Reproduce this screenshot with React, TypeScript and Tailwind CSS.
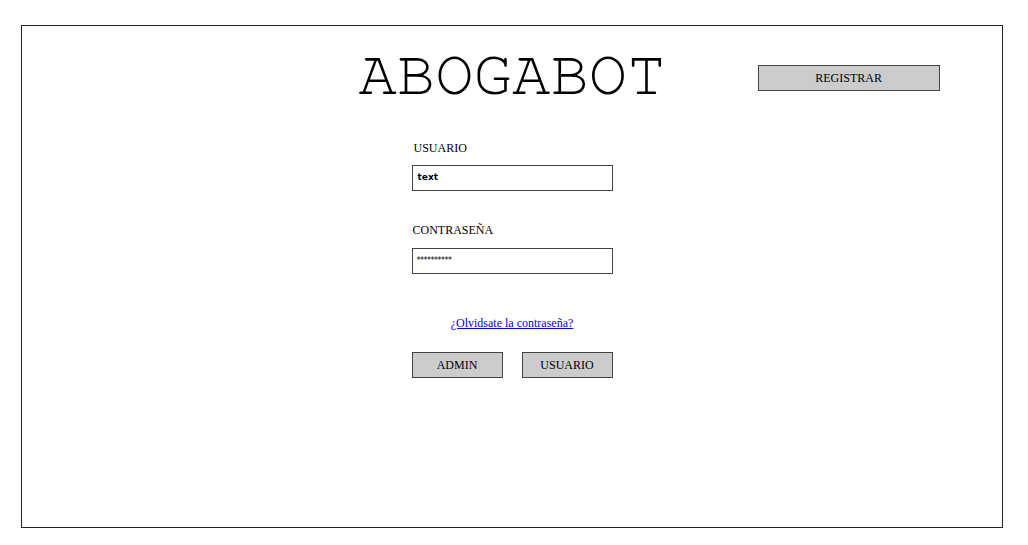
export default function App() {
  return (
    <div className="min-h-screen bg-white pl-[21px] pt-[25px]">
      <div className="w-[982px] h-[503px] border border-[#222] flex flex-col items-center">
        <div className="w-full grid grid-cols-[1fr_auto_1fr] items-start pt-[17px]">
          <div />
          <h1 className="font-['Nimbus_Mono_PS','FreeMono','Courier_10_Pitch','Courier_New','Liberation_Mono',monospace] text-[64px] leading-none text-black">ABOGABOT</h1>
          <div className="pt-[21px]">
            <button className="ml-[92px] w-[182px] h-[26px] bg-[#cccccc] border border-[#444] font-['Liberation_Serif',serif] text-[12px] text-black">
              REGISTRAR
            </button>
          </div>
        </div>

        <div className="w-[201px] flex flex-col font-['Liberation_Serif',serif] text-[12px] text-black mt-[34px]">
          <label className="pl-[2px] leading-[14px]">USUARIO</label>
          <div className="mt-[10px] h-[26px] border border-[#444] flex items-center px-[5px] font-['DejaVu_Sans',sans-serif] text-[9px] font-semibold">
            text
          </div>

          <label className="pl-[1px] leading-[14px] mt-[32px]">CONTRASEÑA</label>
          <div className="mt-[11px] h-[26px] border border-[#444] flex items-center px-[4px] font-['DejaVu_Sans',sans-serif] text-[8px] tracking-[-0.5px]">
            **********
          </div>

          <a href="#" className="self-center mt-[42px] text-[12px] leading-[14px] text-[#0000ee] underline">
            ¿Olvidsate la contraseña?
          </a>

          <div className="flex justify-between mt-[22px]">
            <button className="w-[91px] h-[26px] bg-[#cccccc] border border-[#444] text-[12px]">ADMIN</button>
            <button className="w-[91px] h-[26px] bg-[#cccccc] border border-[#444] text-[12px]">USUARIO</button>
          </div>
        </div>
      </div>
    </div>
  );
}
